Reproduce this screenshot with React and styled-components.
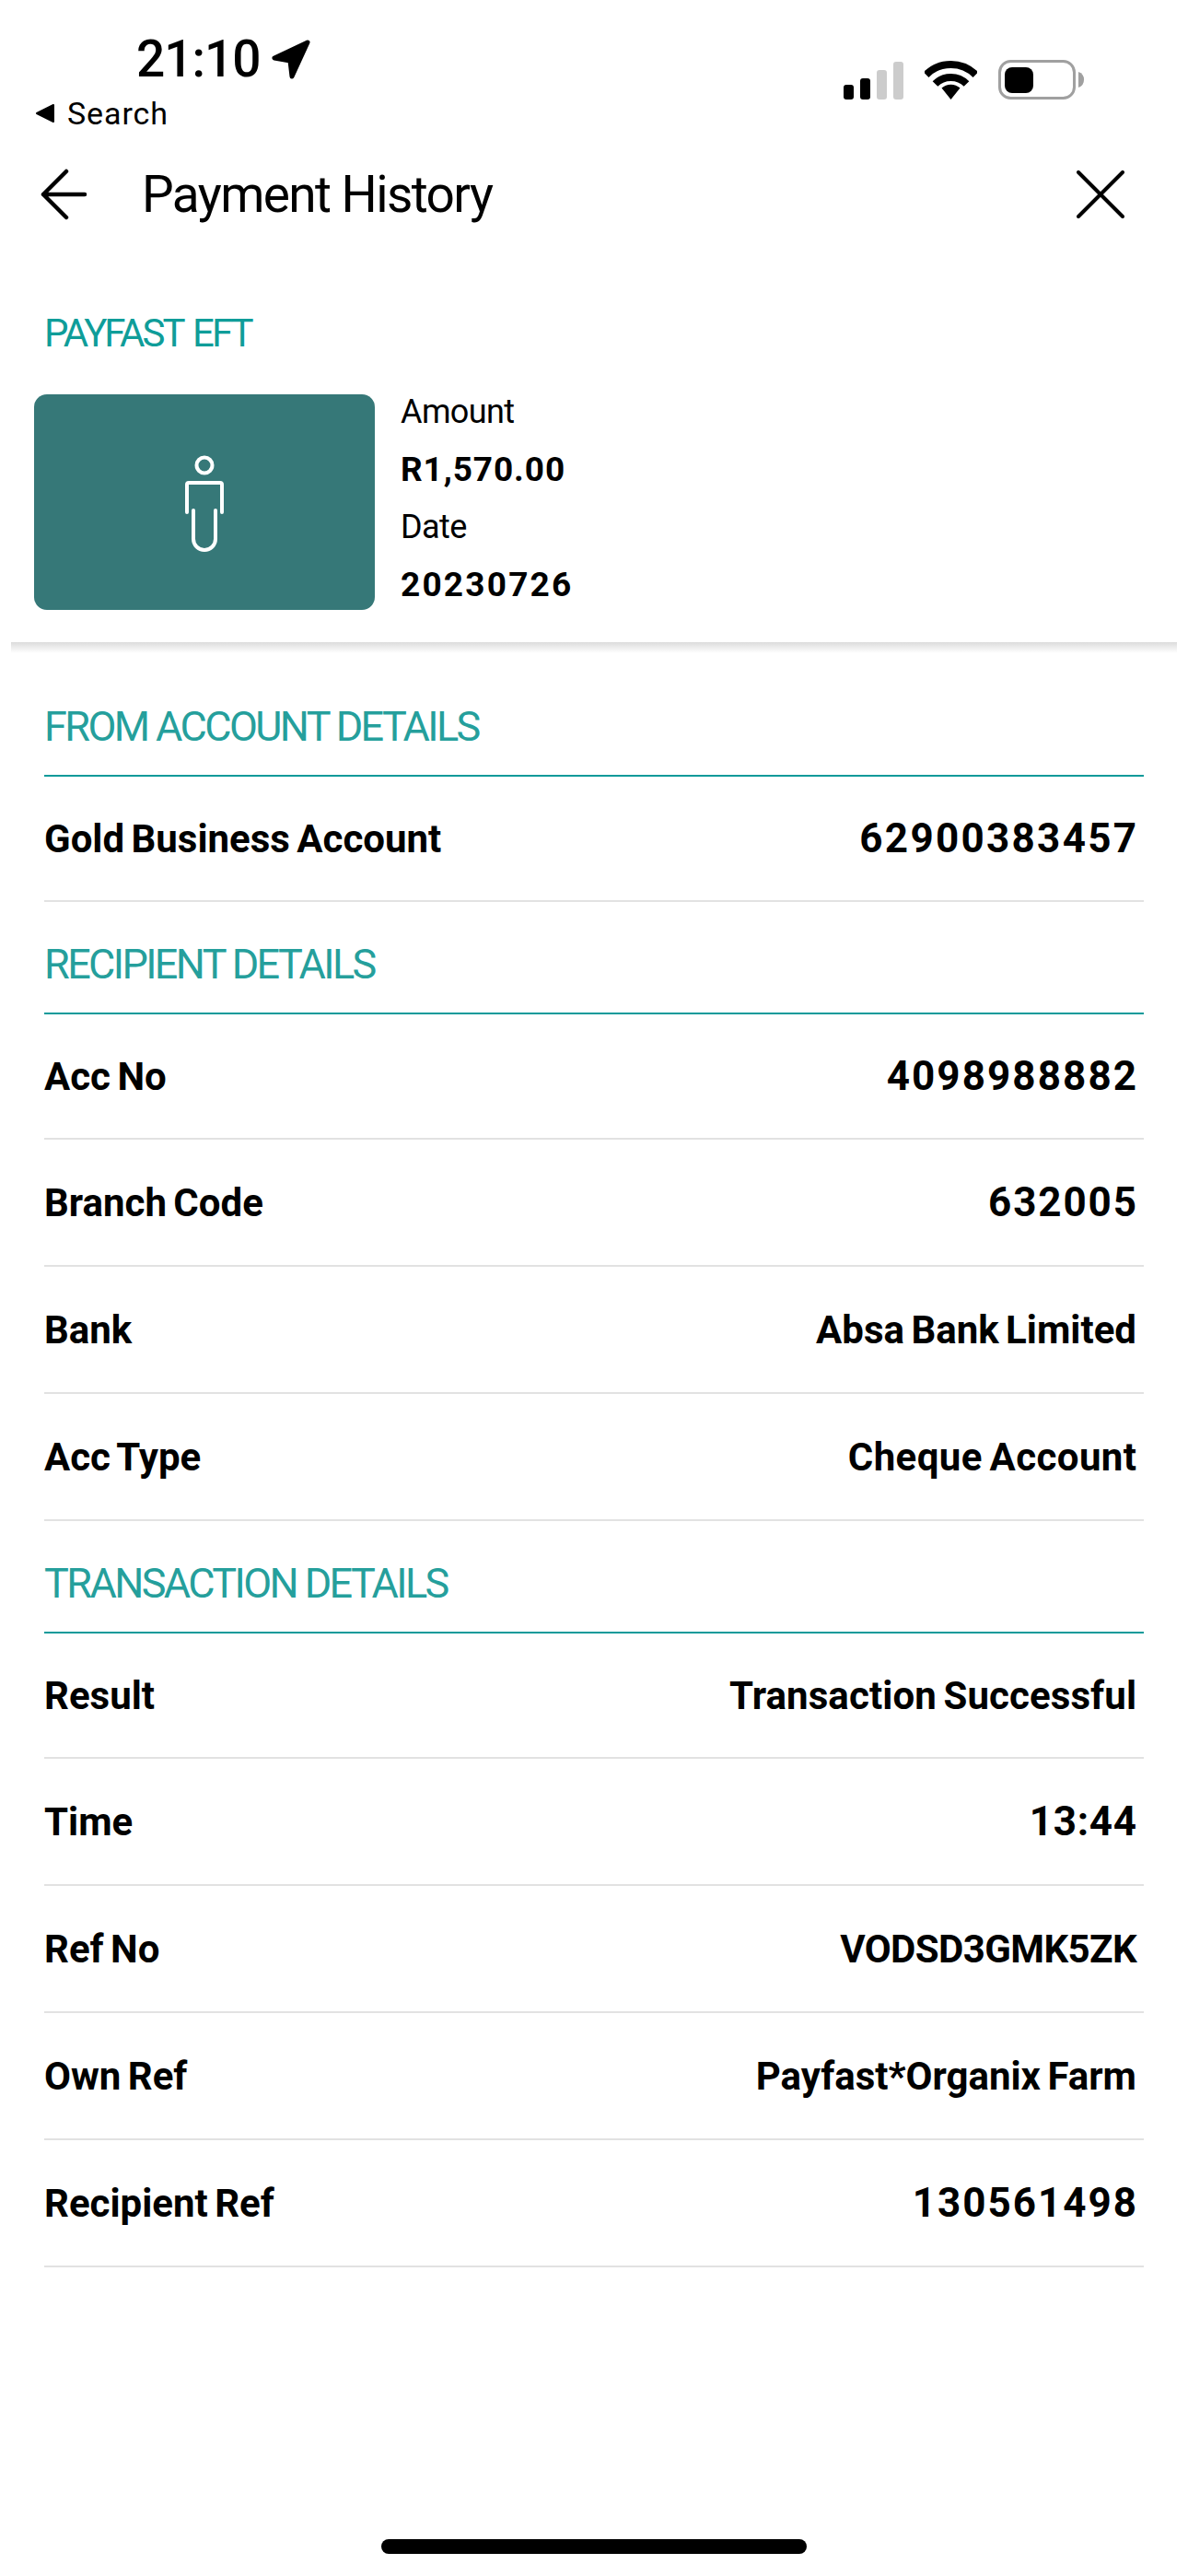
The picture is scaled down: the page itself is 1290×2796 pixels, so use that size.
import React from 'react';
import styled, { createGlobalStyle } from 'styled-components';

const GlobalStyle = createGlobalStyle`
  html, body {
    margin: 0;
    background: #fff;
  }
  body {
    font-family: Roboto, "Liberation Sans", sans-serif;
    color: #000;
  }
`

const Page = styled.div`
  width: 1290px;
  height: 2796px;
  display: flex;
  flex-direction: column;
  overflow: hidden;
  background: #fff;
`
const StatusBar = styled.div`
  height: 140px;
  display: flex;
  justify-content: space-between;
`
const StatusLeft = styled.div`
  padding: 33px 0 0 38px;
`
const TimeRow = styled.div`
  display: flex;
  align-items: center;
  gap: 12px;
  padding-left: 110px;
  height: 62px;
`
const Time = styled.span`
  font-size: 55px;
  line-height: 62px;
  font-weight: 500;
  letter-spacing: -1px;
`
const SearchRow = styled.div`
  display: flex;
  align-items: center;
  gap: 14px;
  margin-top: 8px;
  font-size: 34px;
  line-height: 40px;
  letter-spacing: 0.9px;
`
const StatusRight = styled.div`
  display: flex;
  align-items: flex-end;
  height: 43px;
  margin: 65px 112px 0 0;
  gap: 23px;
`
const SignalBars = styled.div`
  display: flex;
  align-items: flex-end;
  gap: 7px;
`
const SignalBar = styled.div`
  width: 11px;
  height: ${p => p.$h}px;
  border-radius: 3px;
  background: ${p => (p.$on ? '#000' : '#ccc')};
`
const NavBar = styled.div`
  height: 142px;
  display: flex;
  align-items: center;
  padding: 0 69px 0 43px;
`
const Title = styled.h1`
  flex: 1;
  margin: 0 0 0 59px;
  font-size: 55px;
  font-weight: 400;
  letter-spacing: -1.6px;
`
const Summary = styled.div`
  margin: 0 12px;
  height: 415px;
  padding: 58px 0 0 25px;
  box-sizing: border-box;
`
const SummaryTitle = styled.div`
  color: #0f9d99;
  font-size: 42px;
  line-height: 44px;
  margin-left: 11px;
  letter-spacing: -3px;
  word-spacing: 4px;
`
const SummaryBody = styled.div`
  display: flex;
  gap: 28px;
  margin-top: 44px;
`
const Tile = styled.div`
  width: 370px;
  height: 234px;
  box-sizing: border-box;
  padding-top: 5px;
  border-radius: 14px;
  background: #367878;
  display: flex;
  align-items: center;
  justify-content: center;
`
const SummaryList = styled.div`
  display: flex;
  flex-direction: column;
  margin-top: -12px;
`
const SummaryLabel = styled.div`
  font-size: 36px;
  line-height: 62px;
  height: 63px;
  letter-spacing: -0.6px;
`
const SummaryValue = styled.div`
  font-size: 37px;
  line-height: 62px;
  height: 62px;
  font-weight: 700;
  letter-spacing: ${p => p.$spacing}px;
`
const ShadowBar = styled.div`
  height: 12px;
  margin: 0 12px;
  background: linear-gradient(#dcdcdc, #fff);
`
const Section = styled.section`
  margin: 0 48px;
  &:first-of-type {
    margin-top: 12px;
  }
`
const SectionTitle = styled.div`
  height: 122px;
  box-sizing: border-box;
  display: flex;
  align-items: center;
  padding-top: 14px;
  color: #259f9c;
  font-size: 45px;
  letter-spacing: -2.6px;
  border-bottom: 2px solid #0c9a9a;
`
const Row = styled.div`
  height: 136px;
  box-sizing: border-box;
  display: flex;
  align-items: center;
  justify-content: space-between;
  padding-right: 8px;
  border-bottom: 2px solid #e2e2e2;
  font-size: 42px;
  font-weight: 700;
  word-spacing: -3px;
  &:nth-child(n + 3) {
    height: 138px;
  }
`
const RowValue = styled.span`
  font-size: ${p => (p.$numeric ? 44 : 42)}px;
  letter-spacing: ${p => p.$spacing}px;
  margin-right: ${p => (p.$spacing > 0 ? -p.$spacing : 0)}px;
`
const HomeIndicator = styled.div`
  width: 462px;
  height: 16px;
  border-radius: 8px;
  background: #000;
  margin: auto auto 24px;
`

const sections = [
  {
    title: 'FROM ACCOUNT DETAILS',
    rows: [{ label: 'Gold Business Account', value: '62900383457', spacing: 2.3, numeric: true }],
  },
  {
    title: 'RECIPIENT DETAILS',
    rows: [
      { label: 'Acc No', value: '4098988882', spacing: 2.1, numeric: true },
      { label: 'Branch Code', value: '632005', spacing: 1.9, numeric: true },
      { label: 'Bank', value: 'Absa Bank Limited', spacing: 0 },
      { label: 'Acc Type', value: 'Cheque Account', spacing: 0.4 },
    ],
  },
  {
    title: 'TRANSACTION DETAILS',
    rows: [
      { label: 'Result', value: 'Transaction Successful', spacing: 0.1 },
      { label: 'Time', value: '13:44', spacing: 0.7, numeric: true },
      { label: 'Ref No', value: 'VODSD3GMK5ZK', spacing: -0.6 },
      { label: 'Own Ref', value: 'Payfast*Organix Farm', spacing: 0 },
      { label: 'Recipient Ref', value: '130561498', spacing: 2, numeric: true },
    ],
  },
]

const LocationArrow = () => (
  <svg width="42" height="43" viewBox="0 0 42 43">
    <path d="M39 3 L3 20 L20 23 L22 40 Z" fill="#000" stroke="#000" strokeWidth="5" strokeLinejoin="round" />
  </svg>
)

const SearchCaret = () => (
  <svg width="21" height="22" viewBox="0 0 21 22">
    <path d="M20 2 V20 L2 11 Z" fill="#000" stroke="#000" strokeWidth="2" strokeLinejoin="round" />
  </svg>
)

const Wifi = () => (
  <svg width="57" height="43" viewBox="0 0 57 43" fill="none" stroke="#000" strokeWidth="8">
    <path d="M1.6 16.1 A38 38 0 0 1 55.4 16.1" />
    <path d="M11.5 26 A24 24 0 0 1 45.5 26" />
    <path d="M28.5 43 L18.5 30.5 A15 15 0 0 1 38.5 30.5 Z" fill="#000" stroke="none" />
  </svg>
)

const Battery = () => (
  <svg width="94" height="43" viewBox="0 0 94 43">
    <rect x="1.5" y="1.5" width="81" height="40" rx="12" fill="none" stroke="#a0a0a0" strokeWidth="3" />
    <rect x="7" y="8" width="31" height="28" rx="8" fill="#000" />
    <path d="M87 13 A9 9 0 0 1 87 30 Z" fill="#a0a0a0" />
  </svg>
)

const BackArrow = () => (
  <svg width="52" height="56" viewBox="0 0 52 56" fill="none" stroke="#000" strokeWidth="4.5" strokeLinecap="round" strokeLinejoin="round">
    <path d="M49 28 H4 M29 3 L4 28 L29 53" />
  </svg>
)

const CloseIcon = () => (
  <svg width="52" height="52" viewBox="0 0 52 52" fill="none" stroke="#000" strokeWidth="4" strokeLinecap="round">
    <path d="M2 2 L50 50 M50 2 L2 50" />
  </svg>
)

const PersonIcon = () => (
  <svg width="46" height="108" viewBox="0 0 46 108" fill="none" stroke="#fff" strokeWidth="4" strokeLinecap="round">
    <circle cx="23" cy="11" r="8.5" />
    <path d="M4 62 V32 Q4 30 6 30 H40 Q42 30 42 32 V62" />
    <path d="M11 60 V91 A12 12 0 0 0 35 91 V60" />
  </svg>
)

const App = () => (
  <Page>
    <GlobalStyle />
    <StatusBar>
      <StatusLeft>
        <TimeRow>
          <Time>21:10</Time>
          <LocationArrow />
        </TimeRow>
        <SearchRow>
          <SearchCaret />
          Search
        </SearchRow>
      </StatusLeft>
      <StatusRight>
        <SignalBars>
          <SignalBar $h={16} $on />
          <SignalBar $h={23} $on />
          <SignalBar $h={32} />
          <SignalBar $h={41} />
        </SignalBars>
        <Wifi />
        <Battery />
      </StatusRight>
    </StatusBar>
    <NavBar>
      <BackArrow />
      <Title>Payment History</Title>
      <CloseIcon />
    </NavBar>
    <Summary>
      <SummaryTitle>PAYFAST EFT</SummaryTitle>
      <SummaryBody>
        <Tile>
          <PersonIcon />
        </Tile>
        <SummaryList>
          <SummaryLabel>Amount</SummaryLabel>
          <SummaryValue $spacing={0.9}>R1,570.00</SummaryValue>
          <SummaryLabel>Date</SummaryLabel>
          <SummaryValue $spacing={2.2}>20230726</SummaryValue>
        </SummaryList>
      </SummaryBody>
    </Summary>
    <ShadowBar />
    {sections.map(section => (
      <Section key={section.title}>
        <SectionTitle>{section.title}</SectionTitle>
        {section.rows.map(({ label, value, spacing, numeric }) => (
          <Row key={label}>
            <span>{label}</span>
            <RowValue $spacing={spacing} $numeric={numeric}>{value}</RowValue>
          </Row>
        ))}
      </Section>
    ))}
    <HomeIndicator />
  </Page>
)

export default App;
